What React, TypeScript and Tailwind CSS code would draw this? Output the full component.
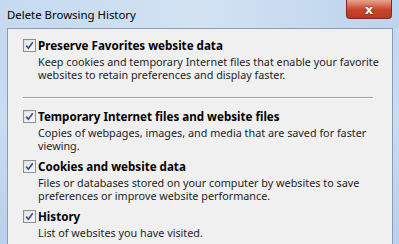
import React from "react";

function Check() {
  return (
    <div className="w-[13px] h-[13px] shrink-0 border border-[#8e8f8f] bg-gradient-to-br from-[#dcdcdc] to-[#fbfbfb] p-[1px]">
      <div className="w-full h-full bg-gradient-to-br from-[#e4e7ec] to-[#f8f9fb] flex items-center justify-center">
        <svg width="9" height="9" viewBox="0 0 9 9">
          <path d="M1.2 4.6 L3.4 7.2 L7.8 1.2" fill="none" stroke="#3c4f8a" strokeWidth="1.7" />
        </svg>
      </div>
    </div>
  );
}

function Item({ title, desc }: { title: string; desc: string[] }) {
  return (
    <div className="flex flex-col">
      <div className="flex items-center gap-[2px] h-[15px]">
        <Check />
        <span className="font-bold text-[11.6px] text-black whitespace-nowrap">{title}</span>
      </div>
      <div className="pl-[15px] pt-[2px] text-[10.8px] leading-[13px] text-[#1e1e1e] whitespace-nowrap">
        {desc.map((d) => (
          <div key={d}>{d}</div>
        ))}
      </div>
    </div>
  );
}

export default function App() {
  return (
    <div
      className="w-[399px] h-[244px] overflow-hidden flex flex-col bg-gradient-to-b from-[#c3d7ee] via-[#c9dcf0] to-[#b9d0ea]"
      style={{ fontFamily: '"Noto Sans", "Open Sans", sans-serif' }}
    >
      <div className="h-[28px] shrink-0 flex items-start justify-between bg-gradient-to-r from-[#c6d9ef] via-[#d2e2f3] to-[#bcd3ec]">
        <span className="pl-[7px] pt-[6px] text-[11.4px] text-black whitespace-nowrap">Delete Browsing History</span>
        <div className="mr-[7px] w-[46px] h-[19px] rounded-b-[4px] border border-t-0 border-[#7a2a20] bg-gradient-to-b from-[#e8a493] via-[#c9492f] to-[#b8391f] flex items-center justify-center">
          <span className="text-white font-bold text-[13px] leading-none" style={{ fontFamily: '"DejaVu Sans", sans-serif', textShadow: "0 0 2px #5a1a10" }}>x</span>
        </div>
      </div>
      <div className="flex-1 ml-[7px] mr-[6px] border border-b-0 border-[#8a9cb2] bg-[#f0f0f0] pl-[15px] pt-[9px] flex flex-col">
        <Item
          title="Preserve Favorites website data"
          desc={[
            "Keep cookies and temporary Internet files that enable your favorite",
            "websites to retain preferences and display faster.",
          ]}
        />
        <div className="mt-[16px] mb-[10px] h-[2px] w-[350px] border-t border-[#a0a0a0] border-b border-b-white" />
        <div className="flex flex-col gap-[7px]">
          <Item
            title="Temporary Internet files and website files"
            desc={["Copies of webpages, images, and media that are saved for faster", "viewing."]}
          />
          <Item
            title="Cookies and website data"
            desc={[
              "Files or databases stored on your computer by websites to save",
              "preferences or improve website performance.",
            ]}
          />
          <Item title="History" desc={["List of websites you have visited."]} />
        </div>
      </div>
    </div>
  );
}
